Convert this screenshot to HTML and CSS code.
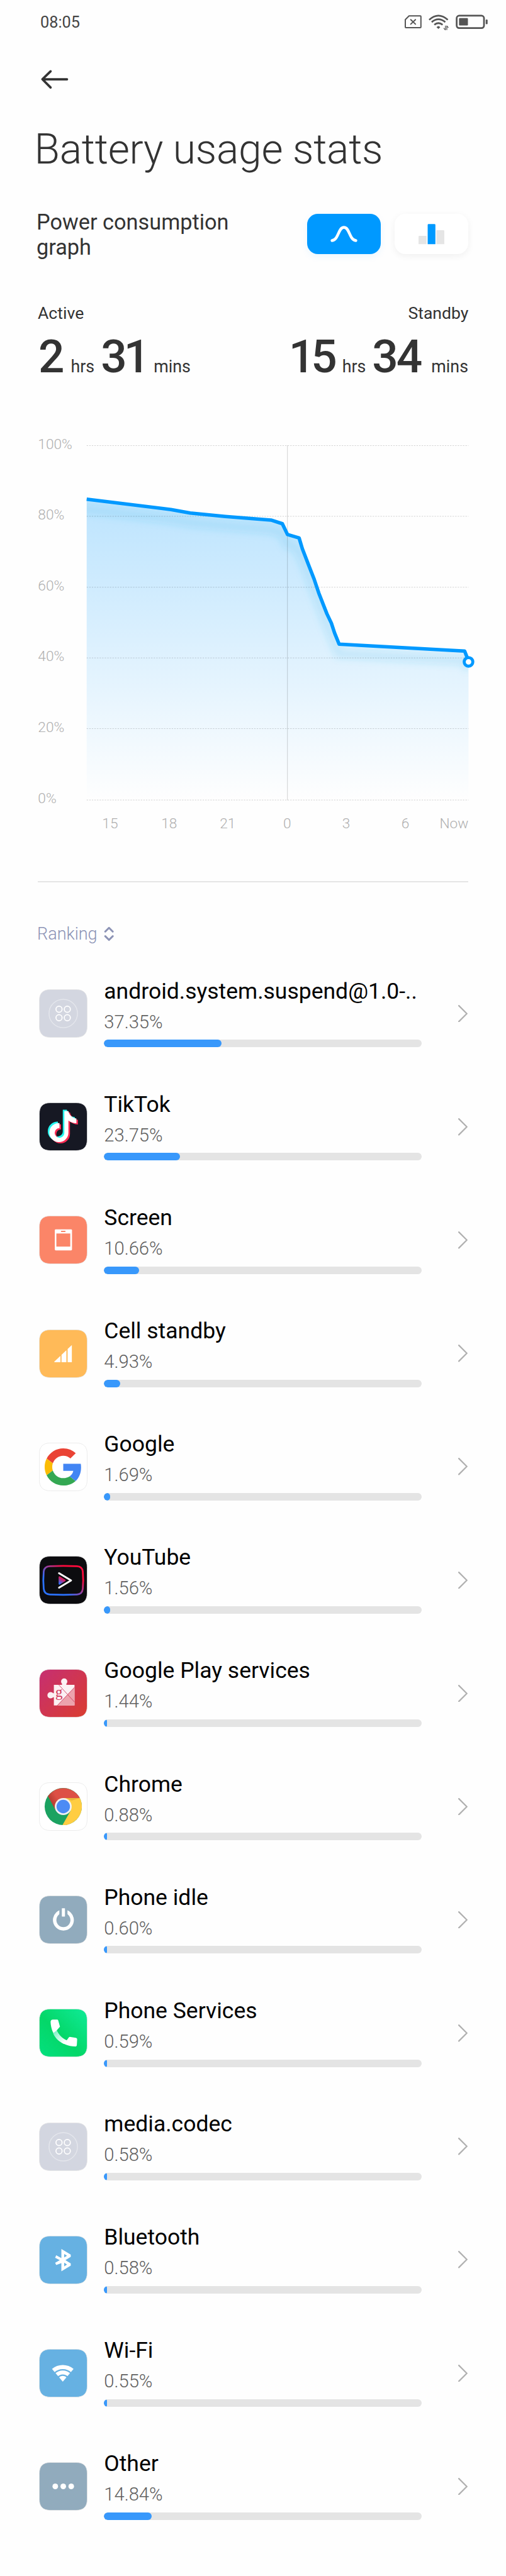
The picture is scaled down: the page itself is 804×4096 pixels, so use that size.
FILE: index.html
```html
<!DOCTYPE html>
<html lang="en">
<head>
  <meta charset="UTF-8" />
  <meta name="viewport" content="width=device-width, initial-scale=1.0" />
  <title>Battery usage stats</title>
  <link rel="stylesheet" href="styles.css">
</head>
<body>
  <svg class="defs" aria-hidden="true">
    <defs>
      <path id="tile" d="M-82-153H82C130-153 153-130 153-82V82C153 130 130 153 82 153H-82C-130 153-153 130-153 82V-82C-153-130-130-153-82-153Z" stroke="#e6e6e6" stroke-width="3" />
      <path id="note" d="M7-100H33C38-75 56-57 84-52V-22C65-22 47-29 33-39V38A61 61 0 1 1-24-23V9A31 31 0 1 0 7 38Z" />
      <g id="apps">
        <use href="#tile" fill="#d3d6e0" />
        <circle r="91" fill="none" stroke="#e4e6ec" stroke-width="6" />
        <g fill="none" stroke="#fff" stroke-width="7">
          <circle cx="-27" cy="-27" r="19.5" />
          <circle cx="26" cy="-27" r="19.5" />
          <circle cx="-27" cy="27" r="19.5" />
          <circle cx="26" cy="27" r="19.5" />
        </g>
      </g>
      <path id="chevron" d="M1.5 1.5 18.5 18.5 1.5 35.5" fill="none" stroke="#b0b0b0" stroke-width="3" stroke-linecap="round" />
      <linearGradient id="areaFill" x1="0" y1="1067" x2="0" y2="1709" gradientUnits="userSpaceOnUse">
        <stop offset="0" stop-color="#0099ff" stop-opacity="0.26" />
        <stop offset="1" stop-color="#0099ff" stop-opacity="0" />
      </linearGradient>
      <linearGradient id="vancedRing" x1="0" y1="1" x2="1" y2="0">
        <stop offset="0.3" stop-color="#2b72ff" />
        <stop offset="0.75" stop-color="#ff0a3c" />
      </linearGradient>
      <linearGradient id="vancedPlay" x1="0" y1="1" x2="0.5" y2="0">
        <stop offset="0" stop-color="#2b72ff" />
        <stop offset="0.8" stop-color="#d81b5c" />
      </linearGradient>
      <linearGradient id="playBg" x1="0" y1="0" x2="1" y2="1">
        <stop offset="0.1" stop-color="#c8306c" />
        <stop offset="0.95" stop-color="#d93c33" />
      </linearGradient>
      <linearGradient id="phoneBg" x1="0" y1="1" x2="1" y2="0">
        <stop offset="0" stop-color="#03e07f" />
        <stop offset="0.45" stop-color="#04d768" />
        <stop offset="1" stop-color="#0feb98" />
      </linearGradient>
      <linearGradient id="phoneFade" x1="-58" y1="-6" x2="10" y2="58" gradientUnits="userSpaceOnUse">
        <stop offset="0" stop-color="#7df2c6" />
        <stop offset="1" stop-color="#fff" />
      </linearGradient>
      <linearGradient id="redShade" x1="-72" y1="-18" x2="-30" y2="-42" gradientUnits="userSpaceOnUse">
        <stop offset="0" stop-color="#b73d32" />
        <stop offset="1" stop-color="#dd5045" />
      </linearGradient>
      <clipPath id="areaClip">
        <path d="M185 1067 365 1089 406 1096.5 481 1103.8 578.5 1111.5 602.6 1119.3 613.6 1142.3 638.4 1149.7 645.3 1172.7 659 1208.3 670.8 1238.7 680.4 1267.4 697.7 1311.6 707.3 1331.7 714.2 1352.9 723.8 1376.5 991.7 1391.4 1000 1414.4V1709H185Z" />
      </clipPath>
      <filter id="soft" x="-10%" y="-10%" width="120%" height="130%">
        <feGaussianBlur stdDeviation="7" />
      </filter>
    </defs>
  </svg>

  <header class="status">
    <span class="clock">08:05</span>
    <svg class="status-icons" viewBox="72 90 534 110" fill="none" stroke="#555">
      <path d="M76 127 100 103H172Q176 103 176 107V175Q176 179 172 179H80Q76 179 76 175Z" stroke-width="8" stroke-linejoin="round" />
      <path d="M111 127 141 156M141 127 111 156" stroke-width="8" stroke-linecap="round" />
      <g stroke-width="11">
        <path d="M229 128Q288 75 348 128" />
        <path d="M245 143Q288 106 332 143" />
        <path d="M262 160Q288 139 315 160" />
      </g>
      <path d="M276 176Q288 162 300 176L288 187Z" fill="#555" stroke="none" />
      <path d="M333 194V166M333 194 322 181M342 166V194M342 167 352 179" stroke-width="5" />
      <rect x="405" y="102" width="175" height="79" rx="16" stroke-width="11" />
      <rect x="420" y="117" width="57" height="48" rx="5" fill="#555" stroke="none" />
      <rect x="591" y="126" width="12" height="30" rx="5" fill="#555" stroke="none" />
    </svg>
  </header>

  <nav class="back">
    <svg class="back-icon" viewBox="86 148 62 44" fill="none" stroke="#333" stroke-width="5" stroke-linecap="round" stroke-linejoin="round">
      <path d="M143 169.500H91M108 152.500 90.500 169.500 108 187" />
    </svg>
  </nav>

  <h1 class="title">Battery usage stats</h1>

  <section class="graph-head">
    <h2>Power consumption graph</h2>
    <div class="modes">
      <button class="mode active" aria-label="Line graph">
        <svg viewBox="0 0 157 86"><path d="M53 57C68 55 66 29 78.500 29S89 55 104 57" fill="none" stroke="#fff" stroke-width="6" stroke-linecap="round" /></svg>
      </button>
      <button class="mode" aria-label="Bar graph">
        <svg viewBox="0 0 157 86">
          <path d="M51 65V49Q51 47 53 47H68V65ZM89 65V35H104Q106 35 106 37V65Z" fill="#e5e5e5" />
          <path d="M70.500 65V24Q70.500 22 72.500 22H85Q87 22 87 24V65Z" fill="#0099ff" />
        </svg>
      </button>
    </div>
  </section>

  <section class="labels">
    <span>Active</span>
    <span>Standby</span>
  </section>
  <section class="times">
    <div class="time active-time"><b>2</b><span>hrs</span><b class="mins">31</b><span>mins</span></div>
    <div class="time standby-time"><b>15</b><span>hrs</span><b class="mins">34</b><span>mins</span></div>
  </section>

  <svg class="chart" viewBox="0 804 1080 1078">
    <g class="axis">
      <text x="81" y="959.500">100%</text>
      <text x="81" y="1110.500">80%</text>
      <text x="81" y="1262">60%</text>
      <text x="81" y="1413">40%</text>
      <text x="81" y="1564.500">20%</text>
      <text x="81" y="1715.500">0%</text>
    </g>
    <g class="axis hours">
      <text x="235" y="1769.500">15</text>
      <text x="361" y="1769.500">18</text>
      <text x="486" y="1769.500">21</text>
      <text x="613" y="1769.500">0</text>
      <text x="739" y="1769.500">3</text>
      <text x="865" y="1769.500">6</text>
      <text class="now" x="1000" y="1769.500">Now</text>
    </g>
    <path d="M185 1067 365 1089 406 1096.500 481 1103.800 578.500 1111.500 602.600 1119.300 613.600 1142.300 638.400 1149.700 645.300 1172.700 659 1208.300 670.800 1238.700 680.400 1267.400 697.700 1311.600 707.300 1331.700 714.200 1352.900 723.800 1376.500 991.700 1391.400 1000 1414.400V1709H185Z" fill="url(#areaFill)" />
    <g clip-path="url(#areaClip)">
      <path class="glow" filter="url(#soft)" d="M170 1087 365 1110 406 1117 481 1124 578 1132 602 1140 613 1163 632 1170 645 1195 670 1260 697 1333 723 1397 991 1412 1000 1430" />
    </g>
    <path class="grid" d="M185 952.500H1000M185 1103.500H1000M185 1255H1000M185 1406H1000M185 1557H1000M185 1709.500H1000" />
    <path class="midnight" d="M613.500 952V1710" />
    <path class="line" d="M185 1067 365 1089 406 1096.500 481 1103.800 578.500 1111.500 602.600 1119.300 613.600 1142.300 638.400 1149.700 645.300 1172.700 659 1208.300 670.800 1238.700 680.400 1267.400 697.700 1311.600 707.300 1331.700 714.200 1352.900 723.800 1376.500 991.700 1391.400 999 1410" />
    <circle cx="1000" cy="1414.400" r="9.200" fill="#fff" stroke="#0099ff" stroke-width="6.500" />
  </svg>

  <hr class="divider">

  <div class="ranking">
    <span>Ranking</span>
    <svg viewBox="0 0 22 32" fill="none" stroke="#8c93b5" stroke-width="4" stroke-linecap="round" stroke-linejoin="round"><path d="M3 11 11 3 19 11M3 21 11 29 19 21" /></svg>
  </div>

  <ul class="apps">
    <li class="app">
      <svg class="icon" viewBox="-155 -155 310 310"><use href="#apps" /></svg>
      <div class="info">
        <div class="name">android.system.suspend@1.0-..</div>
        <div class="pct">37.35%</div>
        <div class="bar"><div class="fill" style="width: 37%"></div></div>
      </div>
      <svg class="chevron" viewBox="0 0 20 37"><use href="#chevron" /></svg>
    </li>
    <li class="app">
      <svg class="icon" viewBox="-155 -155 310 310">
        <use href="#tile" fill="#161823" />
        <use href="#note" x="-10" y="-9" fill="#25f4ee" />
        <use href="#note" x="10" y="8" fill="#fe2c55" />
        <use href="#note" fill="#fff" />
      </svg>
      <div class="info">
        <div class="name">TikTok</div>
        <div class="pct">23.75%</div>
        <div class="bar"><div class="fill" style="width: 24%"></div></div>
      </div>
      <svg class="chevron" viewBox="0 0 20 37"><use href="#chevron" /></svg>
    </li>
    <li class="app">
      <svg class="icon" viewBox="-155 -155 310 310">
        <use href="#tile" fill="#fb8568" />
        <rect x="-54" y="-67" width="110" height="134" rx="6" fill="#fff" />
        <rect x="-44" y="-41" width="89" height="84" fill="#fb8568" />
        <rect x="-15" y="-58" width="30" height="8" rx="4" fill="#fb8568" />
      </svg>
      <div class="info">
        <div class="name">Screen</div>
        <div class="pct">10.66%</div>
        <div class="bar"><div class="fill" style="width: 11%"></div></div>
      </div>
      <svg class="chevron" viewBox="0 0 20 37"><use href="#chevron" /></svg>
    </li>
    <li class="app">
      <svg class="icon" viewBox="-155 -155 310 310">
        <use href="#tile" fill="#ffba58" />
        <path d="M-57 54V50L-18 14V54ZM-11 54V7L20-22V54ZM28 54V-30L55-55V54Z" fill="#fff" />
      </svg>
      <div class="info">
        <div class="name">Cell standby</div>
        <div class="pct">4.93%</div>
        <div class="bar"><div class="fill" style="width: 5%"></div></div>
      </div>
      <svg class="chevron" viewBox="0 0 20 37"><use href="#chevron" /></svg>
    </li>
    <li class="app">
      <svg class="icon" viewBox="-155 -155 310 310">
        <use href="#tile" fill="#fff" />
        <g transform="translate(-119 -119) scale(4.96)">
          <path fill="#ea4335" d="M24 9.500c3.540 0 6.710 1.220 9.210 3.600l6.850-6.850C35.900 2.380 30.470 0 24 0 14.620 0 6.510 5.380 2.560 13.220l7.980 6.190C12.430 13.720 17.740 9.500 24 9.500z" />
          <path fill="#4285f4" d="M46.980 24.550c0-1.570-.150-3.090-.380-4.550H24v9.020h12.940c-.580 2.960-2.260 5.480-4.780 7.180l7.730 6c4.510-4.180 7.090-10.360 7.090-17.650z" />
          <path fill="#fbbc05" d="M10.530 28.590c-.480-1.450-.760-2.990-.760-4.590s.270-3.140.760-4.590l-7.980-6.190C.920 16.460 0 20.120 0 24c0 3.880.920 7.540 2.560 10.780l7.970-6.190z" />
          <path fill="#34a853" d="M24 48c6.480 0 11.930-2.130 15.890-5.810l-7.730-6c-2.150 1.450-4.920 2.300-8.160 2.300-6.260 0-11.570-4.220-13.470-9.910l-7.980 6.190C6.510 42.620 14.620 48 24 48z" />
        </g>
      </svg>
      <div class="info">
        <div class="name">Google</div>
        <div class="pct">1.69%</div>
        <div class="bar"><div class="fill" style="width: 2%"></div></div>
      </div>
      <svg class="chevron" viewBox="0 0 20 37"><use href="#chevron" /></svg>
    </li>
    <li class="app">
      <svg class="icon" viewBox="-155 -155 310 310">
        <use href="#tile" fill="#0c0c0f" />
        <path d="M-85-89Q0-94 87-89Q122-87 125-55Q130 0 125 55Q122 90 87 92Q0 96-85 92Q-122 90-125 55Q-130 0-125-55Q-122-87-85-89Z" fill="none" stroke="url(#vancedRing)" stroke-width="11" />
        <path d="M-27-44 50 2-27 48" fill="none" stroke="#fff" stroke-width="12" stroke-linecap="round" stroke-linejoin="round" />
        <path d="M-25-20 11 2-25 24Z" fill="url(#vancedPlay)" stroke="url(#vancedPlay)" stroke-width="9" stroke-linejoin="round" />
      </svg>
      <div class="info">
        <div class="name">YouTube</div>
        <div class="pct">1.56%</div>
        <div class="bar"><div class="fill" style="width: 2%"></div></div>
      </div>
      <svg class="chevron" viewBox="0 0 20 37"><use href="#chevron" /></svg>
    </li>
    <li class="app">
      <svg class="icon" viewBox="-155 -155 310 310">
        <use href="#tile" fill="url(#playBg)" />
        <path d="M-60-54H-8V-61A20 20 0 1 1 20-61V-54H72V78H-60V25H-65A20.500 20.500 0 1 1-65-1H-60Z" fill="#fcf0f3" />
        <path d="M-38 78 72-38V78Z" fill="#eca3ad" />
        <path d="M-28-54 72 56M-38 78 72-38" stroke="#d0385a" stroke-width="3.500" />
        <text class="play-g" x="-50" y="24">g</text>
      </svg>
      <div class="info">
        <div class="name">Google Play services</div>
        <div class="pct">1.44%</div>
        <div class="bar"><div class="fill" style="width: 1%"></div></div>
      </div>
      <svg class="chevron" viewBox="0 0 20 37"><use href="#chevron" /></svg>
    </li>
    <li class="app">
      <svg class="icon" viewBox="-155 -155 310 310">
        <use href="#tile" fill="#fff" />
        <circle r="119" fill="#1ba261" />
        <path d="M-98-66A119 119 0 0 1 106-54H0L-47 27Z" fill="url(#redShade)" />
        <path d="M106-54A119 119 0 0 1-5 119L47 27 0-54Z" fill="#ffcd42" />
        <path d="M15-54H106L54-38Z" fill="#e8b53a" />
        <circle r="54" fill="#f1f1f1" />
        <circle r="43" fill="#4c8bf5" />
      </svg>
      <div class="info">
        <div class="name">Chrome</div>
        <div class="pct">0.88%</div>
        <div class="bar"><div class="fill" style="width: 1%"></div></div>
      </div>
      <svg class="chevron" viewBox="0 0 20 37"><use href="#chevron" /></svg>
    </li>
    <li class="app">
      <svg class="icon" viewBox="-155 -155 310 310">
        <use href="#tile" fill="#91abbd" />
        <circle cx="1" cy="2" r="56" fill="none" stroke="#fff" stroke-width="22" />
        <rect x="-25" y="-75" width="52" height="48" fill="#91abbd" />
        <rect x="-9" y="-73" width="20" height="53" rx="2" fill="#fff" />
      </svg>
      <div class="info">
        <div class="name">Phone idle</div>
        <div class="pct">0.60%</div>
        <div class="bar"><div class="fill" style="width: 1%"></div></div>
      </div>
      <svg class="chevron" viewBox="0 0 20 37"><use href="#chevron" /></svg>
    </li>
    <li class="app">
      <svg class="icon" viewBox="-155 -155 310 310">
        <use href="#tile" fill="url(#phoneBg)" />
        <path d="M-81-70Q-81-86-66-86H-40Q-34-86-32-80L-21-40-42-16C-28 14-4 38 22 47L36 28Q38 25 42 25L80 31Q89 33 89 40L87 76Q86 87 76 87C-10 87-78 20-81-70Z" fill="#fff" />
        <path d="M-65 2-42-16C-28 14-4 38 22 47L4 70C-28 56-52 32-65 2Z" fill="url(#phoneFade)" />
      </svg>
      <div class="info">
        <div class="name">Phone Services</div>
        <div class="pct">0.59%</div>
        <div class="bar"><div class="fill" style="width: 1%"></div></div>
      </div>
      <svg class="chevron" viewBox="0 0 20 37"><use href="#chevron" /></svg>
    </li>
    <li class="app">
      <svg class="icon" viewBox="-155 -155 310 310"><use href="#apps" /></svg>
      <div class="info">
        <div class="name">media.codec</div>
        <div class="pct">0.58%</div>
        <div class="bar"><div class="fill" style="width: 1%"></div></div>
      </div>
      <svg class="chevron" viewBox="0 0 20 37"><use href="#chevron" /></svg>
    </li>
    <li class="app">
      <svg class="icon" viewBox="-155 -155 310 310">
        <use href="#tile" fill="#66b1e2" />
        <path fill="#fff" fill-rule="evenodd" d="M-12-70 48-34V-20L14 1 48 22V36L-12 72V20L-45 32-52 18-22 1-52-14-45-30-12-12ZM6-38V-16L24-27ZM6 17V41L24 29Z" />
      </svg>
      <div class="info">
        <div class="name">Bluetooth</div>
        <div class="pct">0.58%</div>
        <div class="bar"><div class="fill" style="width: 1%"></div></div>
      </div>
      <svg class="chevron" viewBox="0 0 20 37"><use href="#chevron" /></svg>
    </li>
    <li class="app">
      <svg class="icon" viewBox="-155 -155 310 310">
        <use href="#tile" fill="#66b1e2" />
        <path d="M-3 54-72-27A107 107 0 0 1 66-27Z" fill="#fff" />
        <g fill="none" stroke="#66b1e2" stroke-width="9">
          <path d="M-55-1A75 75 0 0 1 49-1" />
          <path d="M-33 26A40 40 0 0 1 27 26" />
        </g>
      </svg>
      <div class="info">
        <div class="name">Wi-Fi</div>
        <div class="pct">0.55%</div>
        <div class="bar"><div class="fill" style="width: 1%"></div></div>
      </div>
      <svg class="chevron" viewBox="0 0 20 37"><use href="#chevron" /></svg>
    </li>
    <li class="app">
      <svg class="icon" viewBox="-155 -155 310 310">
        <use href="#tile" fill="#91abbd" />
        <g fill="#fff">
          <circle cx="-51" r="18" />
          <circle r="18" />
          <circle cx="51" r="18" />
        </g>
      </svg>
      <div class="info">
        <div class="name">Other</div>
        <div class="pct">14.84%</div>
        <div class="bar"><div class="fill" style="width: 15%"></div></div>
      </div>
      <svg class="chevron" viewBox="0 0 20 37"><use href="#chevron" /></svg>
    </li>
  </ul>
</body>
</html>
```
FILE: styles.css
```css
* {
  box-sizing: border-box;
}
body {
  margin: 0;
  width: 804px;
  height: 4096px;
  overflow: hidden;
  background: #fefefe;
  color: #333;
  font-family: Roboto, sans-serif;
}
h1, h2, ul {
  margin: 0;
  padding: 0;
  font-weight: 400;
}
svg {
  display: block;
}
.defs {
  position: absolute;
  width: 0;
  height: 0;
}

/* top bar */
.status {
  display: flex;
  justify-content: space-between;
  align-items: center;
  height: 71.5px;
  padding: 0 28.3px 0 64px;
}
.clock {
  font-size: 25.3px;
  color: #444;
}
.status-icons {
  width: 132.5px;
  height: 27.3px;
}
.back {
  display: flex;
  align-items: center;
  height: 109.4px;
  padding-left: 64px;
}
.back-icon {
  width: 46.2px;
  height: 32.8px;
}
.title {
  height: 110.9px;
  padding-left: 54.5px;
  font-size: 66px;
  font-weight: 300;
  letter-spacing: -0.3px;
  line-height: 113px;
  white-space: nowrap;
}

/* graph header */
.graph-head {
  display: flex;
  justify-content: space-between;
  align-items: center;
  height: 160.8px;
  padding: 0 59.6px 0 58px;
}
.graph-head h2 {
  width: 330px;
  padding-top: 2px;
  font-size: 34.3px;
  line-height: 40.2px;
}
.modes {
  display: flex;
  gap: 22.6px;
}
.mode {
  width: 117px;
  height: 64px;
  padding: 0;
  border: 0;
  border-radius: 17px;
  background: #fff;
  box-shadow: 0 3px 12px rgba(0, 0, 0, 0.06);
}
.mode.active {
  background: #0099ff;
  box-shadow: 0 4px 12px rgba(0, 153, 255, 0.08);
}
.mode svg {
  width: 117px;
  height: 64px;
}
.labels {
  display: flex;
  justify-content: space-between;
  align-items: center;
  height: 75.9px;
  margin-top: 7.4px;
  padding: 0 59.6px 0 60px;
  font-size: 26.6px;
}
.times {
  display: flex;
  justify-content: space-between;
  height: 62.6px;
  padding: 0 60px 0 61px;
}
.time {
  display: flex;
  align-items: baseline;
  font-size: 26.8px;
  line-height: 62.6px;
}
.time b {
  font-size: 73px;
  font-weight: 500;
}
.active-time b {
  margin-right: 10px;
}
.active-time .mins {
  margin: 0 11px 0 10px;
  letter-spacing: -5px;
}
.standby-time b {
  margin-right: 14px;
  letter-spacing: -6px;
}
.standby-time .mins {
  margin: 0 17px 0 10px;
  letter-spacing: -3px;
}

/* chart */
.chart {
  width: 804px;
  height: 802.5px;
}
.axis {
  fill: #b0b0b0;
  font-size: 30.5px;
  font-weight: 300;
}
.hours {
  text-anchor: middle;
}
.now {
  text-anchor: end;
}
.grid {
  fill: none;
  stroke: #000;
  stroke-opacity: 0.2;
  stroke-width: 1.2;
  stroke-dasharray: 3 2.5;
}
.midnight {
  fill: none;
  stroke: #000;
  stroke-opacity: 0.2;
  stroke-width: 1.2;
}
.line {
  fill: none;
  stroke: #0099ff;
  stroke-width: 7.5;
  stroke-linejoin: round;
}
.glow {
  fill: none;
  stroke: #32b4e6;
  stroke-opacity: 0.14;
  stroke-width: 20;
}
.divider {
  height: 2px;
  margin: 0 59.6px -0.5px;
  border: 0;
  background: #e5e5e5;
}

/* ranking list */
.ranking {
  display: flex;
  align-items: center;
  gap: 10px;
  height: 119.1px;
  padding: 46.2px 0 0 59px;
  color: #8c93b5;
  font-size: 27px;
  font-weight: 300;
}
.ranking svg {
  width: 16.4px;
  height: 23.8px;
}
.apps {
  list-style: none;
}
.app {
  display: flex;
  align-items: center;
  height: 180.15px;
  padding: 0 60.5px 0 62px;
}
.icon {
  width: 77px;
  height: 77px;
}
.info {
  width: 504.7px;
  margin: -2.4px 58px 0 26.3px;
  white-space: nowrap;
}
.name {
  color: #000;
  font-size: 35.5px;
  line-height: 41.7px;
}
.pct {
  margin: 10.3px 0 11.5px;
  color: #606060;
  font-size: 29.2px;
  font-weight: 300;
  line-height: 34.2px;
}
.bar {
  height: 12px;
  border-radius: 6px;
  background: #e4e4e4;
  overflow: hidden;
}
.fill {
  height: 12px;
  border-radius: 6px;
  background: #3898fb;
}
.chevron {
  width: 14.9px;
  height: 27.5px;
}
.play-g {
  fill: #d0385a;
  font-family: "Liberation Serif", serif;
  font-size: 92px;
}
```
